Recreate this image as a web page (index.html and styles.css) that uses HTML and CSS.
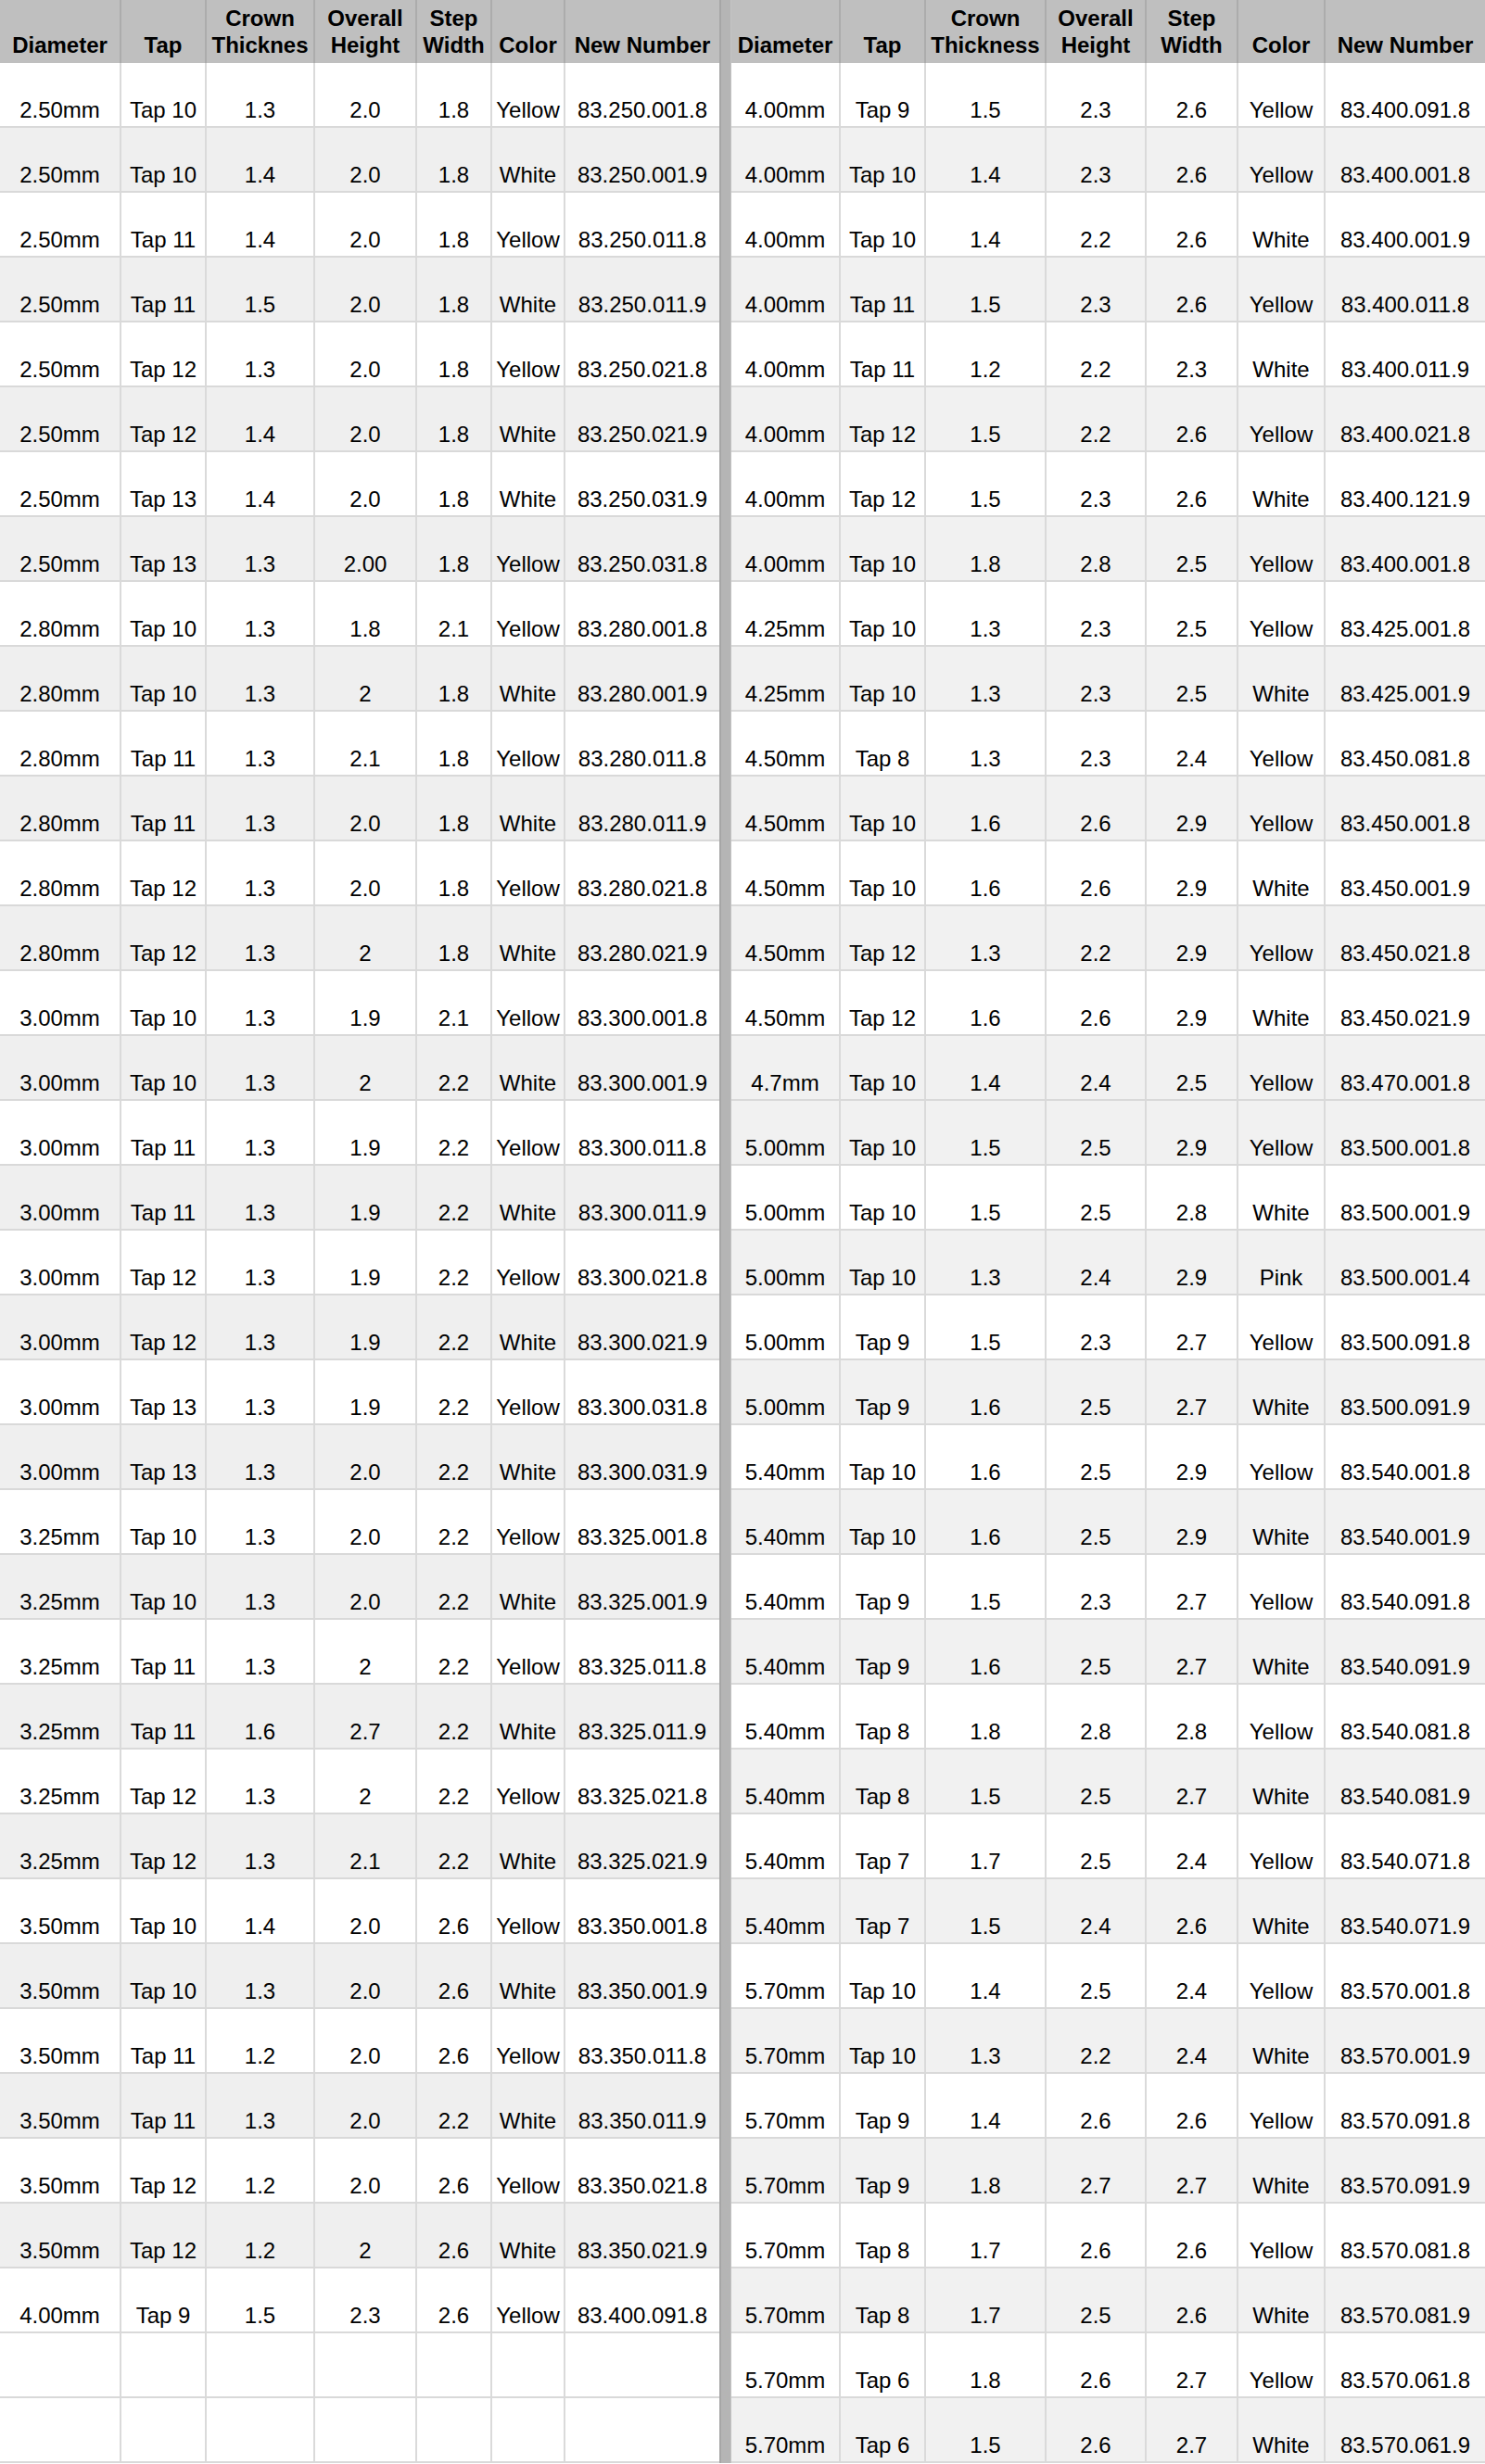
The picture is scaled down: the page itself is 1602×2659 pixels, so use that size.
FILE: index.html
```html
<!DOCTYPE html>
<html lang="en">
<head>
<meta charset="utf-8">
<title>Crown sizes</title>
<link rel="stylesheet" href="styles.css">
</head>
<body>
<div class="sheet">
  <div class="table left">
    <div class="row head"><span>Diameter</span><span>Tap</span><span>Crown<br>Thicknes</span><span>Overall<br>Height</span><span>Step<br>Width</span><span>Color</span><span>New Number</span></div>
    <div class="row"><span>2.50mm</span><span>Tap 10</span><span>1.3</span><span>2.0</span><span>1.8</span><span>Yellow</span><span>83.250.001.8</span></div>
    <div class="row alt"><span>2.50mm</span><span>Tap 10</span><span>1.4</span><span>2.0</span><span>1.8</span><span>White</span><span>83.250.001.9</span></div>
    <div class="row"><span>2.50mm</span><span>Tap 11</span><span>1.4</span><span>2.0</span><span>1.8</span><span>Yellow</span><span>83.250.011.8</span></div>
    <div class="row alt"><span>2.50mm</span><span>Tap 11</span><span>1.5</span><span>2.0</span><span>1.8</span><span>White</span><span>83.250.011.9</span></div>
    <div class="row"><span>2.50mm</span><span>Tap 12</span><span>1.3</span><span>2.0</span><span>1.8</span><span>Yellow</span><span>83.250.021.8</span></div>
    <div class="row alt"><span>2.50mm</span><span>Tap 12</span><span>1.4</span><span>2.0</span><span>1.8</span><span>White</span><span>83.250.021.9</span></div>
    <div class="row"><span>2.50mm</span><span>Tap 13</span><span>1.4</span><span>2.0</span><span>1.8</span><span>White</span><span>83.250.031.9</span></div>
    <div class="row alt"><span>2.50mm</span><span>Tap 13</span><span>1.3</span><span>2.00</span><span>1.8</span><span>Yellow</span><span>83.250.031.8</span></div>
    <div class="row"><span>2.80mm</span><span>Tap 10</span><span>1.3</span><span>1.8</span><span>2.1</span><span>Yellow</span><span>83.280.001.8</span></div>
    <div class="row alt"><span>2.80mm</span><span>Tap 10</span><span>1.3</span><span>2</span><span>1.8</span><span>White</span><span>83.280.001.9</span></div>
    <div class="row"><span>2.80mm</span><span>Tap 11</span><span>1.3</span><span>2.1</span><span>1.8</span><span>Yellow</span><span>83.280.011.8</span></div>
    <div class="row alt"><span>2.80mm</span><span>Tap 11</span><span>1.3</span><span>2.0</span><span>1.8</span><span>White</span><span>83.280.011.9</span></div>
    <div class="row"><span>2.80mm</span><span>Tap 12</span><span>1.3</span><span>2.0</span><span>1.8</span><span>Yellow</span><span>83.280.021.8</span></div>
    <div class="row alt"><span>2.80mm</span><span>Tap 12</span><span>1.3</span><span>2</span><span>1.8</span><span>White</span><span>83.280.021.9</span></div>
    <div class="row"><span>3.00mm</span><span>Tap 10</span><span>1.3</span><span>1.9</span><span>2.1</span><span>Yellow</span><span>83.300.001.8</span></div>
    <div class="row alt"><span>3.00mm</span><span>Tap 10</span><span>1.3</span><span>2</span><span>2.2</span><span>White</span><span>83.300.001.9</span></div>
    <div class="row"><span>3.00mm</span><span>Tap 11</span><span>1.3</span><span>1.9</span><span>2.2</span><span>Yellow</span><span>83.300.011.8</span></div>
    <div class="row alt"><span>3.00mm</span><span>Tap 11</span><span>1.3</span><span>1.9</span><span>2.2</span><span>White</span><span>83.300.011.9</span></div>
    <div class="row"><span>3.00mm</span><span>Tap 12</span><span>1.3</span><span>1.9</span><span>2.2</span><span>Yellow</span><span>83.300.021.8</span></div>
    <div class="row alt"><span>3.00mm</span><span>Tap 12</span><span>1.3</span><span>1.9</span><span>2.2</span><span>White</span><span>83.300.021.9</span></div>
    <div class="row"><span>3.00mm</span><span>Tap 13</span><span>1.3</span><span>1.9</span><span>2.2</span><span>Yellow</span><span>83.300.031.8</span></div>
    <div class="row alt"><span>3.00mm</span><span>Tap 13</span><span>1.3</span><span>2.0</span><span>2.2</span><span>White</span><span>83.300.031.9</span></div>
    <div class="row"><span>3.25mm</span><span>Tap 10</span><span>1.3</span><span>2.0</span><span>2.2</span><span>Yellow</span><span>83.325.001.8</span></div>
    <div class="row alt"><span>3.25mm</span><span>Tap 10</span><span>1.3</span><span>2.0</span><span>2.2</span><span>White</span><span>83.325.001.9</span></div>
    <div class="row"><span>3.25mm</span><span>Tap 11</span><span>1.3</span><span>2</span><span>2.2</span><span>Yellow</span><span>83.325.011.8</span></div>
    <div class="row alt"><span>3.25mm</span><span>Tap 11</span><span>1.6</span><span>2.7</span><span>2.2</span><span>White</span><span>83.325.011.9</span></div>
    <div class="row"><span>3.25mm</span><span>Tap 12</span><span>1.3</span><span>2</span><span>2.2</span><span>Yellow</span><span>83.325.021.8</span></div>
    <div class="row alt"><span>3.25mm</span><span>Tap 12</span><span>1.3</span><span>2.1</span><span>2.2</span><span>White</span><span>83.325.021.9</span></div>
    <div class="row"><span>3.50mm</span><span>Tap 10</span><span>1.4</span><span>2.0</span><span>2.6</span><span>Yellow</span><span>83.350.001.8</span></div>
    <div class="row alt"><span>3.50mm</span><span>Tap 10</span><span>1.3</span><span>2.0</span><span>2.6</span><span>White</span><span>83.350.001.9</span></div>
    <div class="row"><span>3.50mm</span><span>Tap 11</span><span>1.2</span><span>2.0</span><span>2.6</span><span>Yellow</span><span>83.350.011.8</span></div>
    <div class="row alt"><span>3.50mm</span><span>Tap 11</span><span>1.3</span><span>2.0</span><span>2.2</span><span>White</span><span>83.350.011.9</span></div>
    <div class="row"><span>3.50mm</span><span>Tap 12</span><span>1.2</span><span>2.0</span><span>2.6</span><span>Yellow</span><span>83.350.021.8</span></div>
    <div class="row alt"><span>3.50mm</span><span>Tap 12</span><span>1.2</span><span>2</span><span>2.6</span><span>White</span><span>83.350.021.9</span></div>
    <div class="row"><span>4.00mm</span><span>Tap 9</span><span>1.5</span><span>2.3</span><span>2.6</span><span>Yellow</span><span>83.400.091.8</span></div>
    <div class="row"><span></span><span></span><span></span><span></span><span></span><span></span><span></span></div>
    <div class="row"><span></span><span></span><span></span><span></span><span></span><span></span><span></span></div>
  </div>
  <div class="divider"></div>
  <div class="table right">
    <div class="row head"><span>Diameter</span><span>Tap</span><span>Crown<br>Thickness</span><span>Overall<br>Height</span><span>Step<br>Width</span><span>Color</span><span>New Number</span></div>
    <div class="row"><span>4.00mm</span><span>Tap 9</span><span>1.5</span><span>2.3</span><span>2.6</span><span>Yellow</span><span>83.400.091.8</span></div>
    <div class="row alt"><span>4.00mm</span><span>Tap 10</span><span>1.4</span><span>2.3</span><span>2.6</span><span>Yellow</span><span>83.400.001.8</span></div>
    <div class="row"><span>4.00mm</span><span>Tap 10</span><span>1.4</span><span>2.2</span><span>2.6</span><span>White</span><span>83.400.001.9</span></div>
    <div class="row alt"><span>4.00mm</span><span>Tap 11</span><span>1.5</span><span>2.3</span><span>2.6</span><span>Yellow</span><span>83.400.011.8</span></div>
    <div class="row"><span>4.00mm</span><span>Tap 11</span><span>1.2</span><span>2.2</span><span>2.3</span><span>White</span><span>83.400.011.9</span></div>
    <div class="row alt"><span>4.00mm</span><span>Tap 12</span><span>1.5</span><span>2.2</span><span>2.6</span><span>Yellow</span><span>83.400.021.8</span></div>
    <div class="row"><span>4.00mm</span><span>Tap 12</span><span>1.5</span><span>2.3</span><span>2.6</span><span>White</span><span>83.400.121.9</span></div>
    <div class="row alt"><span>4.00mm</span><span>Tap 10</span><span>1.8</span><span>2.8</span><span>2.5</span><span>Yellow</span><span>83.400.001.8</span></div>
    <div class="row"><span>4.25mm</span><span>Tap 10</span><span>1.3</span><span>2.3</span><span>2.5</span><span>Yellow</span><span>83.425.001.8</span></div>
    <div class="row alt"><span>4.25mm</span><span>Tap 10</span><span>1.3</span><span>2.3</span><span>2.5</span><span>White</span><span>83.425.001.9</span></div>
    <div class="row"><span>4.50mm</span><span>Tap 8</span><span>1.3</span><span>2.3</span><span>2.4</span><span>Yellow</span><span>83.450.081.8</span></div>
    <div class="row alt"><span>4.50mm</span><span>Tap 10</span><span>1.6</span><span>2.6</span><span>2.9</span><span>Yellow</span><span>83.450.001.8</span></div>
    <div class="row"><span>4.50mm</span><span>Tap 10</span><span>1.6</span><span>2.6</span><span>2.9</span><span>White</span><span>83.450.001.9</span></div>
    <div class="row alt"><span>4.50mm</span><span>Tap 12</span><span>1.3</span><span>2.2</span><span>2.9</span><span>Yellow</span><span>83.450.021.8</span></div>
    <div class="row"><span>4.50mm</span><span>Tap 12</span><span>1.6</span><span>2.6</span><span>2.9</span><span>White</span><span>83.450.021.9</span></div>
    <div class="row alt"><span>4.7mm</span><span>Tap 10</span><span>1.4</span><span>2.4</span><span>2.5</span><span>Yellow</span><span>83.470.001.8</span></div>
    <div class="row alt"><span>5.00mm</span><span>Tap 10</span><span>1.5</span><span>2.5</span><span>2.9</span><span>Yellow</span><span>83.500.001.8</span></div>
    <div class="row"><span>5.00mm</span><span>Tap 10</span><span>1.5</span><span>2.5</span><span>2.8</span><span>White</span><span>83.500.001.9</span></div>
    <div class="row alt"><span>5.00mm</span><span>Tap 10</span><span>1.3</span><span>2.4</span><span>2.9</span><span>Pink</span><span>83.500.001.4</span></div>
    <div class="row"><span>5.00mm</span><span>Tap 9</span><span>1.5</span><span>2.3</span><span>2.7</span><span>Yellow</span><span>83.500.091.8</span></div>
    <div class="row alt"><span>5.00mm</span><span>Tap 9</span><span>1.6</span><span>2.5</span><span>2.7</span><span>White</span><span>83.500.091.9</span></div>
    <div class="row"><span>5.40mm</span><span>Tap 10</span><span>1.6</span><span>2.5</span><span>2.9</span><span>Yellow</span><span>83.540.001.8</span></div>
    <div class="row alt"><span>5.40mm</span><span>Tap 10</span><span>1.6</span><span>2.5</span><span>2.9</span><span>White</span><span>83.540.001.9</span></div>
    <div class="row"><span>5.40mm</span><span>Tap 9</span><span>1.5</span><span>2.3</span><span>2.7</span><span>Yellow</span><span>83.540.091.8</span></div>
    <div class="row alt"><span>5.40mm</span><span>Tap 9</span><span>1.6</span><span>2.5</span><span>2.7</span><span>White</span><span>83.540.091.9</span></div>
    <div class="row"><span>5.40mm</span><span>Tap 8</span><span>1.8</span><span>2.8</span><span>2.8</span><span>Yellow</span><span>83.540.081.8</span></div>
    <div class="row alt"><span>5.40mm</span><span>Tap 8</span><span>1.5</span><span>2.5</span><span>2.7</span><span>White</span><span>83.540.081.9</span></div>
    <div class="row"><span>5.40mm</span><span>Tap 7</span><span>1.7</span><span>2.5</span><span>2.4</span><span>Yellow</span><span>83.540.071.8</span></div>
    <div class="row alt"><span>5.40mm</span><span>Tap 7</span><span>1.5</span><span>2.4</span><span>2.6</span><span>White</span><span>83.540.071.9</span></div>
    <div class="row"><span>5.70mm</span><span>Tap 10</span><span>1.4</span><span>2.5</span><span>2.4</span><span>Yellow</span><span>83.570.001.8</span></div>
    <div class="row alt"><span>5.70mm</span><span>Tap 10</span><span>1.3</span><span>2.2</span><span>2.4</span><span>White</span><span>83.570.001.9</span></div>
    <div class="row"><span>5.70mm</span><span>Tap 9</span><span>1.4</span><span>2.6</span><span>2.6</span><span>Yellow</span><span>83.570.091.8</span></div>
    <div class="row alt"><span>5.70mm</span><span>Tap 9</span><span>1.8</span><span>2.7</span><span>2.7</span><span>White</span><span>83.570.091.9</span></div>
    <div class="row"><span>5.70mm</span><span>Tap 8</span><span>1.7</span><span>2.6</span><span>2.6</span><span>Yellow</span><span>83.570.081.8</span></div>
    <div class="row alt"><span>5.70mm</span><span>Tap 8</span><span>1.7</span><span>2.5</span><span>2.6</span><span>White</span><span>83.570.081.9</span></div>
    <div class="row"><span>5.70mm</span><span>Tap 6</span><span>1.8</span><span>2.6</span><span>2.7</span><span>Yellow</span><span>83.570.061.8</span></div>
    <div class="row alt"><span>5.70mm</span><span>Tap 6</span><span>1.5</span><span>2.6</span><span>2.7</span><span>White</span><span>83.570.061.9</span></div>
  </div>
</div>
</body>
</html>
```

FILE: styles.css
```css
html, body {
  margin: 0;
  padding: 0;
  background: #ffffff;
}

body {
  font-family: "Liberation Sans", Arial, Helvetica, sans-serif;
  color: #000000;
}

.sheet {
  display: flex;
  width: 1602px;
  align-items: stretch;
}

.table.left {
  width: 776px;
  flex: none;
}

.table.right {
  width: 813px;
  flex: none;
}

.divider {
  flex: none;
  width: 13px;
  box-sizing: border-box;
  background: #b5b5b5;
  border-left: 2px solid #a6a6a6;
  border-right: 1px solid #c4c4c4;
}

.row {
  display: grid;
  height: 70px;
  box-sizing: border-box;
  border-bottom: 2px solid #d9d9d9;
  background: #ffffff;
}

.left .row {
  grid-template-columns: 131px 92px 117px 110px 81px 79px 166px;
}

.right .row {
  grid-template-columns: 118px 92px 130px 108px 99px 94px 172px;
}

.row.alt {
  background: #efefef;
}

.right .row.alt {
  background: #f1f1f1;
}

.row > span {
  display: flex;
  align-items: flex-end;
  justify-content: center;
  box-sizing: border-box;
  border-right: 2px solid #dadada;
  padding-bottom: 5px;
  font-size: 24px;
  line-height: 24px;
  white-space: nowrap;
  overflow: hidden;
  text-align: center;
}

.row > span:last-child {
  border-right: 0;
}

.row.head {
  height: 68px;
  background: #bfbfbf;
  border-bottom: 0;
}

.row.head > span {
  font-weight: bold;
  font-size: 24px;
  line-height: 29px;
  padding-bottom: 5px;
  border-right: 2px solid #acacac;
}

.row.head > span:last-child {
  border-right: 0;
}
```
